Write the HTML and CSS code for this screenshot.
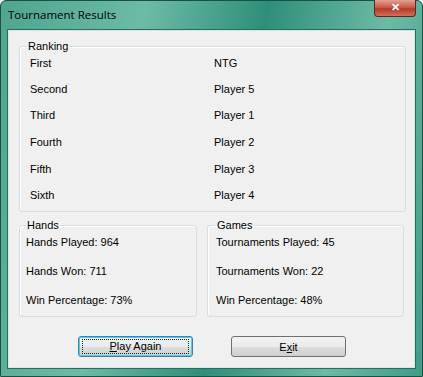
FILE: index.html
```html
<!DOCTYPE html>
<html>
<head>
  <title>Tournament Results</title>
  <link rel="stylesheet" href="styles.css">
</head>
<body>
  <div class="window">
    <div class="titlebar">
      <span class="title">Tournament Results</span>
      <span class="closebtn">&#x2715;</span>
    </div>
    <div class="client">
      <fieldset class="group ranking">
        <legend>Ranking</legend>
        <div class="rankgrid">
          <span>First</span><span>NTG</span>
          <span>Second</span><span>Player 5</span>
          <span>Third</span><span>Player 1</span>
          <span>Fourth</span><span>Player 2</span>
          <span>Fifth</span><span>Player 3</span>
          <span>Sixth</span><span>Player 4</span>
        </div>
      </fieldset>
      <div class="stats">
        <fieldset class="group hands">
          <legend>Hands</legend>
          <p>Hands Played: 964</p>
          <p>Hands Won: 711</p>
          <p>Win Percentage: 73%</p>
        </fieldset>
        <fieldset class="group games">
          <legend>Games</legend>
          <p>Tournaments Played: 45</p>
          <p>Tournaments Won: 22</p>
          <p>Win Percentage: 48%</p>
        </fieldset>
      </div>
      <div class="buttons">
        <button class="btn default"><span class="focus"><u>P</u>lay Again</span></button>
        <button class="btn">E<u>x</u>it</button>
      </div>
    </div>
  </div>
</body>
</html>
```
FILE: styles.css
```css
body{
 margin:0;
 font-family:"Liberation Sans",Arial,sans-serif;
 font-size:11px;
 color:black;
}
.window{
 width:423px;
 height:377px;
 box-sizing:border-box;
 background:linear-gradient(100deg,#4fa58f 0%,#6cbba7 30%,#2e8f78 55%,#6dbaa6 80%,#3f9d87 100%);
 border:1px solid #1d4f45;
 border-radius:6px 6px 0 0;
 display:flex;
 flex-direction:column;
}
.titlebar{
 height:28px;
 display:flex;
 align-items:flex-start;
 justify-content:space-between;
 padding:0 6px 0 7px;
}
.title{
 font-family:"Open Sans",sans-serif;
 font-size:11.5px;
 color:black;
 margin-top:6px;
}
.closebtn{
 width:40px;
 height:16px;
 margin-top:-1px;
 border:1px solid #5a2a22;
 border-top:none;
 border-radius:0 0 4px 4px;
 background:linear-gradient(#e0a193 0%,#cc5c4a 45%,#b13a26 55%,#d66e55 100%);
 color:white;
 font-size:11px;
 font-weight:bold;
 text-align:center;
 line-height:15px;
}
.client{
 flex:1;
 margin:0 6px 7px 6px;
 background:#f0f0f0;
 border:1px solid #2c6b5e;
 box-shadow:inset 0 0 0 1px #d8e6e2;
 padding:10px 9px 0 11px;
}
.group{
 border:1px solid #d5dfe5;
 border-radius:3px;
 margin:0;
 box-shadow:inset 1px 1px 0 #ffffff;
}
.group legend{
 padding:0 1px;
 margin-left:-3px;
}
.ranking{
 padding:0 10px 2px 10px;
 height:172px;
 box-sizing:border-box;
}
.rankgrid{
 display:grid;
 grid-template-columns:184px 1fr;
 grid-template-rows:26px 26px 26px 28px 26px 26px;
 align-items:center;
 margin-top:-2px;
}
.stats{
 display:flex;
 gap:10px;
 margin-top:7px;
}
.group p{
 margin:0 0 16px 0;
 line-height:13px;
}
.hands{
 width:178px;
 box-sizing:border-box;
 height:98px;
 padding:5px 6px;
}
.hands legend{
 margin-left:0;
}
.games{
 width:197px;
 box-sizing:border-box;
 height:98px;
 padding:5px 8px;
}
.games legend{
 margin-left:0;
}
.buttons{
 display:flex;
 gap:38px;
 margin-top:19px;
 padding-left:59px;
}
.btn{
 width:115px;
 height:21px;
 font-family:"Liberation Sans",Arial,sans-serif;
 font-size:11px;
 color:black;
 border:1px solid #707070;
 border-radius:3px;
 background:linear-gradient(#f2f2f2 0%,#ebebeb 50%,#dddddd 51%,#cfcfcf 100%);
 padding:0;
}
.default{
 border-color:#3c7fb1;
 box-shadow:inset 0 0 0 1px #48d0f5;
}
.focus{
 display:block;
 margin:2px 3px;
 border:1px dotted #222;
 line-height:13px;
}
```
